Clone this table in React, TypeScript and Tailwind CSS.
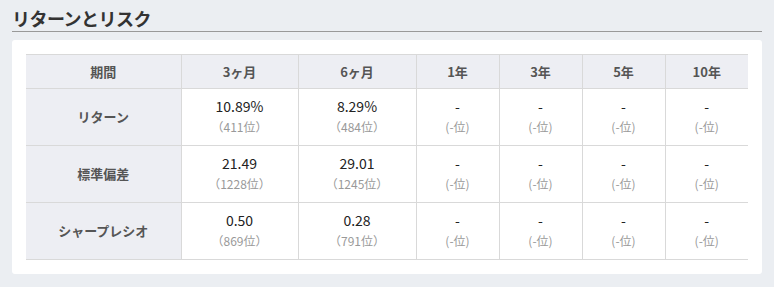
import React from "react";

const cols = ["期間", "3ヶ月", "6ヶ月", "1年", "3年", "5年", "10年"];
const widths = ["w-[155px]", "w-[117px]", "w-[118px]", "w-[83px]", "w-[83px]", "w-[83px]", "w-[83px]"];

const rows: { label: string; cells: [string, string][] }[] = [
  {
    label: "リターン",
    cells: [
      ["10.89%", "（411位）"],
      ["8.29%", "（484位）"],
      ["-", "(-位)"],
      ["-", "(-位)"],
      ["-", "(-位)"],
      ["-", "(-位)"],
    ],
  },
  {
    label: "標準偏差",
    cells: [
      ["21.49", "（1228位）"],
      ["29.01", "（1245位）"],
      ["-", "(-位)"],
      ["-", "(-位)"],
      ["-", "(-位)"],
      ["-", "(-位)"],
    ],
  },
  {
    label: "シャープレシオ",
    cells: [
      ["0.50", "（869位）"],
      ["0.28", "（791位）"],
      ["-", "(-位)"],
      ["-", "(-位)"],
      ["-", "(-位)"],
      ["-", "(-位)"],
    ],
  },
];

export default function App() {
  return (
    <div
      className="w-[774px] h-[287px] bg-[#ebeef2] px-[12px] pt-[6px]"
      style={{ fontFamily: '"Noto Sans CJK JP", "Noto Sans", sans-serif' }}
    >
      <h2 className="text-[18px] font-bold text-[#333] leading-[24px] pb-[1px] border-b border-[#999] tracking-[-0.5px]">
        リターンとリスク
      </h2>
      <div className="mt-[8px] bg-white rounded-[3px] px-[14px] pt-[14px] pb-[14px]">
        <table className="border-collapse table-fixed w-[722px]">
          <thead>
            <tr className="h-[34px] bg-[#edeef3]">
              {cols.map((c, i) => (
                <th
                  key={c}
                  className={`${widths[i]} border-t border-b border-[#d9d9d9] ${i > 0 ? "border-l" : ""} text-[13px] font-bold text-[#555] text-center p-0`}
                >
                  {c}
                </th>
              ))}
            </tr>
          </thead>
          <tbody>
            {rows.map((r) => (
              <tr key={r.label} className="h-[57px]">
                <td className="bg-[#edeef3] border-b border-[#d9d9d9] text-[13px] font-bold text-[#555] text-center p-0">
                  {r.label}
                </td>
                {r.cells.map(([v, rank], j) => (
                  <td
                    key={j}
                    className="border-b border-l border-[#d9d9d9] text-center p-0 align-middle"
                  >
                    <div className="text-[14px] leading-[20px] text-[#222] -mt-[2px]">{v}</div>
                    <div className="text-[12px] leading-[20px] text-[#999] mt-[1px]">{rank}</div>
                  </td>
                ))}
              </tr>
            ))}
          </tbody>
        </table>
      </div>
    </div>
  );
}
